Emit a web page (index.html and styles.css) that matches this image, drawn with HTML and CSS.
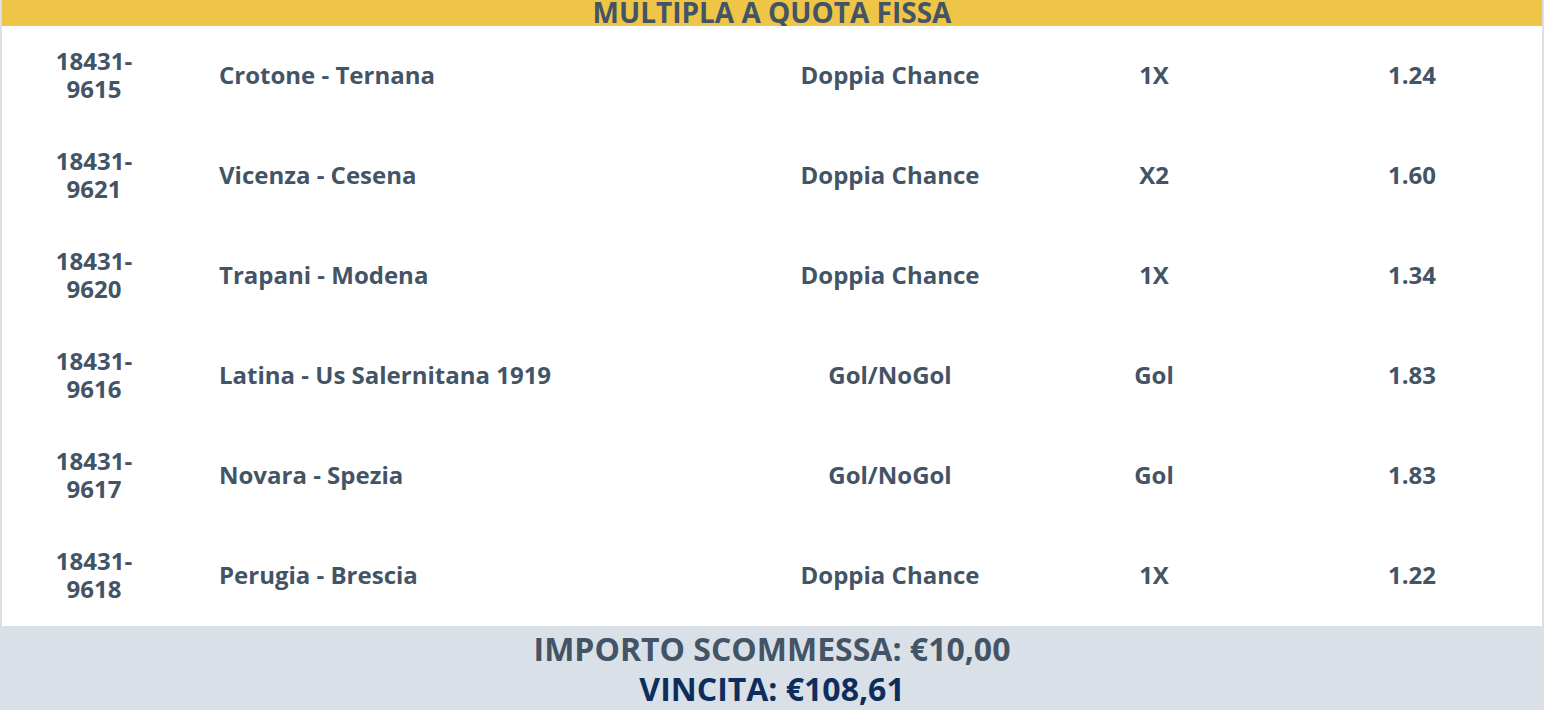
FILE: index.html
```html
<!DOCTYPE html>
<html lang="it">
<head>
    <meta charset="UTF-8">
    <meta name="viewport" content="width=device-width, initial-scale=1.0">
    <title>Multipla a quota fissa</title>
    <link rel="stylesheet" href="styles.css">
</head>
<body>
    <div class="schedina">
        <header class="schedina-header">
            <h1>MULTIPLA A QUOTA FISSA</h1>
        </header>

        <div class="eventi">
            <div class="evento">
                <span class="codice">18431-<br>9615</span>
                <span class="partita">Crotone - Ternana</span>
                <span class="mercato">Doppia Chance</span>
                <span class="esito">1X</span>
                <span class="quota">1.24</span>
            </div>
            <div class="evento">
                <span class="codice">18431-<br>9621</span>
                <span class="partita">Vicenza - Cesena</span>
                <span class="mercato">Doppia Chance</span>
                <span class="esito">X2</span>
                <span class="quota">1.60</span>
            </div>
            <div class="evento">
                <span class="codice">18431-<br>9620</span>
                <span class="partita">Trapani - Modena</span>
                <span class="mercato">Doppia Chance</span>
                <span class="esito">1X</span>
                <span class="quota">1.34</span>
            </div>
            <div class="evento">
                <span class="codice">18431-<br>9616</span>
                <span class="partita">Latina - Us Salernitana 1919</span>
                <span class="mercato">Gol/NoGol</span>
                <span class="esito">Gol</span>
                <span class="quota">1.83</span>
            </div>
            <div class="evento">
                <span class="codice">18431-<br>9617</span>
                <span class="partita">Novara - Spezia</span>
                <span class="mercato">Gol/NoGol</span>
                <span class="esito">Gol</span>
                <span class="quota">1.83</span>
            </div>
            <div class="evento">
                <span class="codice">18431-<br>9618</span>
                <span class="partita">Perugia - Brescia</span>
                <span class="mercato">Doppia Chance</span>
                <span class="esito">1X</span>
                <span class="quota">1.22</span>
            </div>
        </div>

        <footer class="riepilogo">
            <p class="importo">IMPORTO SCOMMESSA: €10,00</p>
            <p class="vincita">VINCITA: €108,61</p>
        </footer>
    </div>
</body>
</html>
```

FILE: styles.css
```css
* {
    margin: 0;
    padding: 0;
    box-sizing: border-box;
    font-family: 'Open Sans', sans-serif;
}

body {
    background: #fff;
    color: #435466;
}

.schedina {
    border-left: 2px solid #d9e0e7;
    border-right: 2px solid #d9e0e7;
}

.schedina-header {
    background: #efc547;
    height: 26px;
    overflow: hidden;
    text-align: center;
}

.schedina-header h1 {
    font-size: 28px;
    font-weight: 700;
    line-height: 18px;
    padding-top: 3px;
}

.evento {
    display: grid;
    grid-template-columns: 184px 568px 272px 256px 1fr;
    align-items: center;
    height: 100px;
    padding-bottom: 4px;
    font-size: 24px;
    font-weight: 700;
}

.codice {
    text-align: center;
    line-height: 28px;
    padding-top: 2px;
}

.partita {
    padding-left: 33px;
}

.mercato,
.esito,
.quota {
    text-align: center;
}

.riepilogo {
    background: #d9e0e7;
    text-align: center;
    font-weight: 700;
    font-size: 32px;
    line-height: 40px;
    padding-top: 3px;
    height: 84px;
}

.vincita {
    color: #0d2d5c;
}
```
